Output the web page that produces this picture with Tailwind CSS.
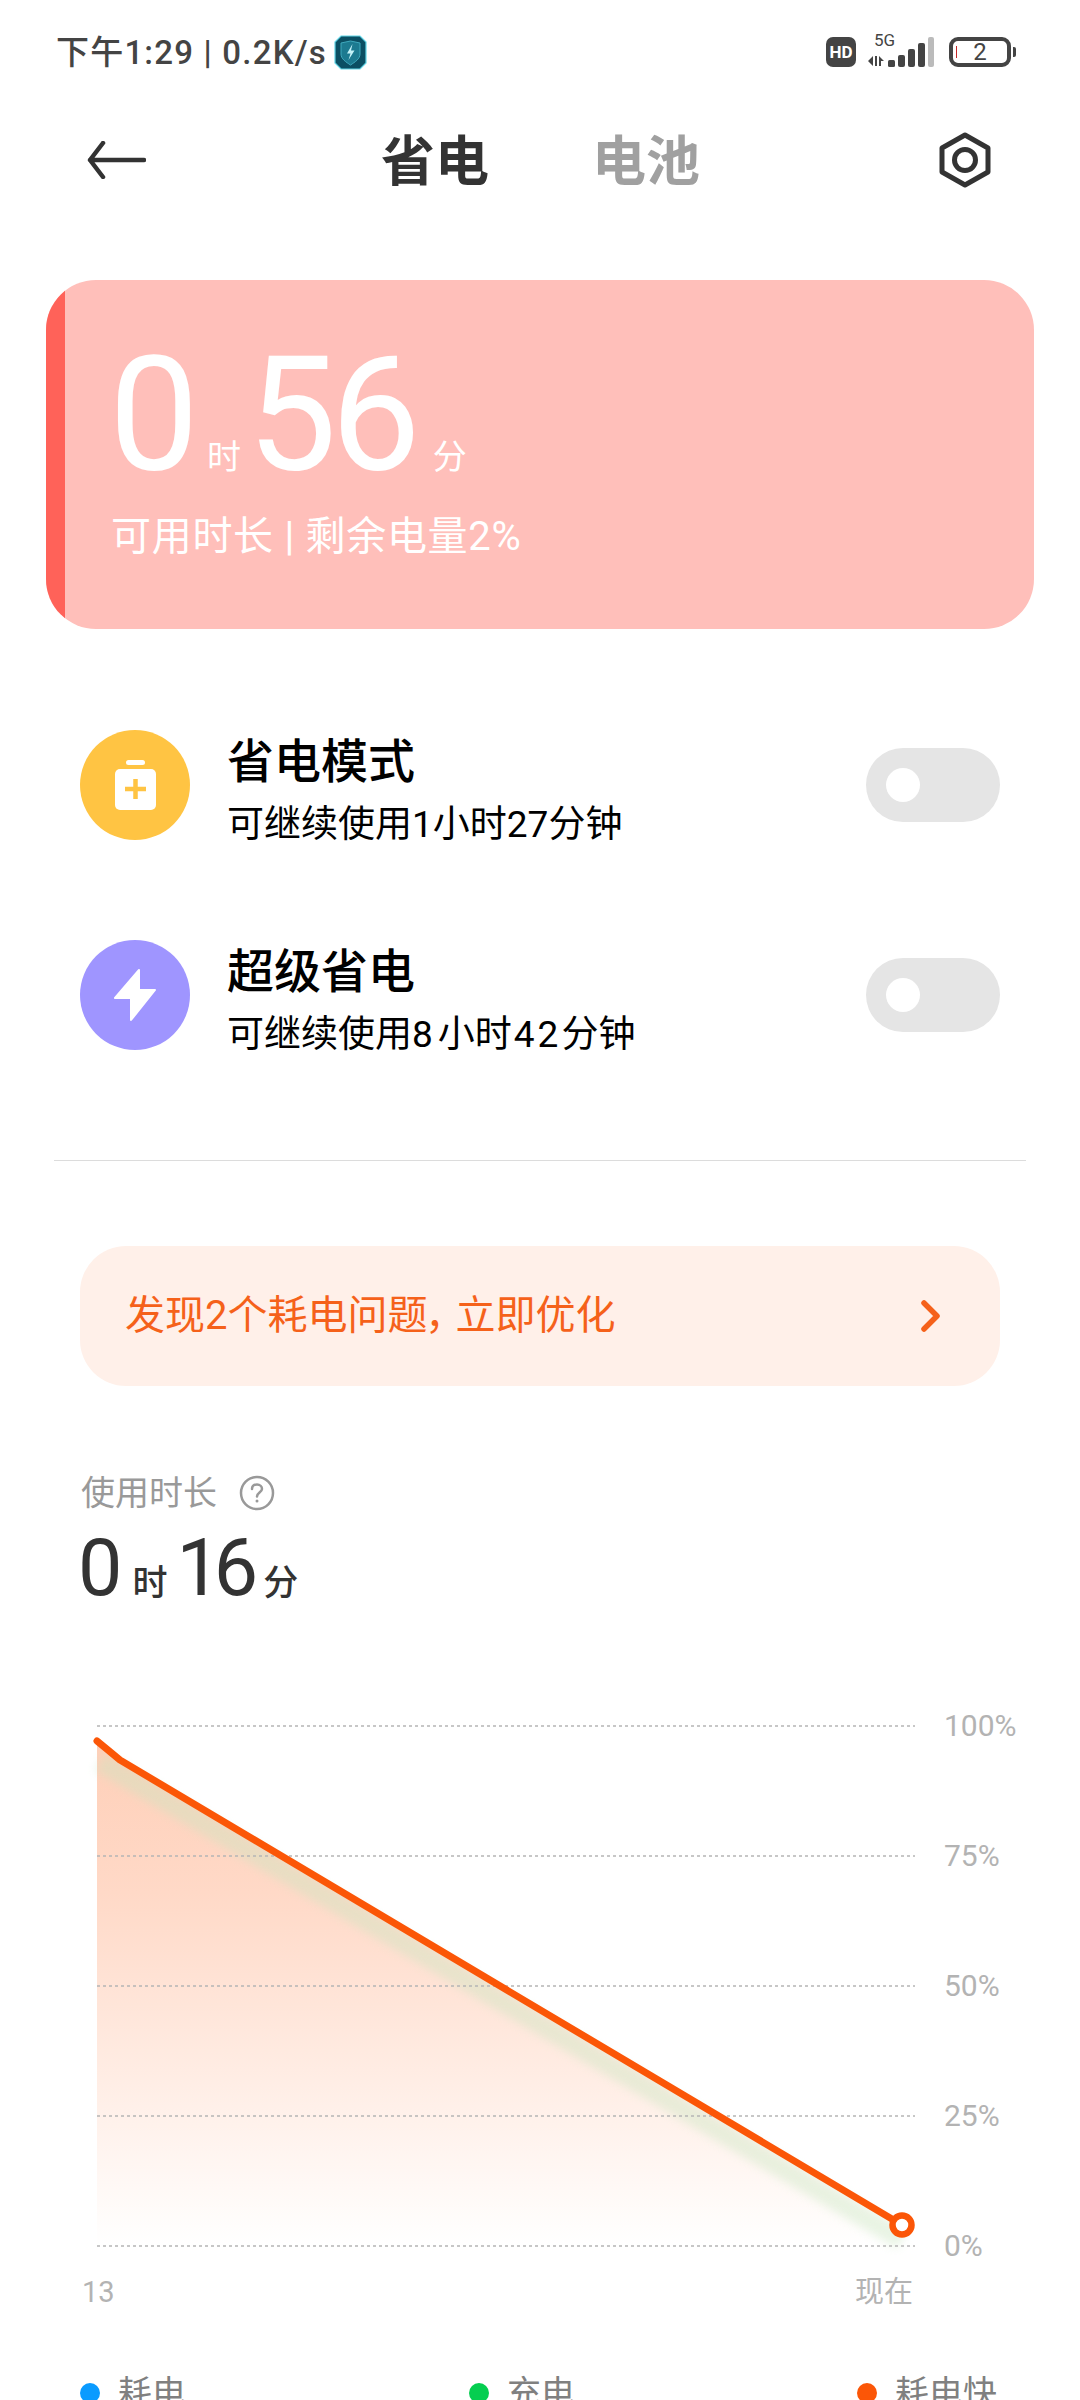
<!DOCTYPE html>
<html lang="zh">
<head>
    <meta charset="UTF-8">
    <meta name="viewport" content="width=device-width, initial-scale=1.0">
    <title>省电</title>
    <script src="https://cdn.jsdelivr.net/npm/@tailwindcss/browser@4"></script>
</head>
<body class="bg-white">
    <div class="w-[1080px] h-[2400px] overflow-hidden bg-white font-['Roboto','Noto_Sans_CJK_SC',sans-serif]">

        <!-- 状态栏 -->
        <div class="h-[104px] flex items-center pl-[56px] pr-[64px] text-[#444]">
            <span class="text-[33px] leading-none tracking-[1.200px] font-medium whitespace-nowrap">下午1:29 | 0.2K/s</span>
            <svg class="ml-[7px]" width="33" height="35" viewBox="0 0 33 35">
                <path d="M7 1H26L32 7V28L26 34H7L1 28V7Z" fill="#0b4f63" stroke="#63d5e6" stroke-width="1.200"/>
                <path d="M7 8L16.500 6L26 8V19C26 24 21 27 16.500 30C12 27 7 24 7 19Z" fill="#1c7a90" stroke="#3fa9bd" stroke-width="1"/>
                <path d="M18.500 9L13 18.500H16.500L14.500 25L20.500 15.500H17Z" fill="#c4f2f8"/>
            </svg>
            <div class="ml-auto w-[30px] h-[30px] rounded-[7px] bg-[#444] text-white text-[17px] font-bold leading-none flex items-center justify-center">HD</div>
            <div class="relative ml-[12px] w-[66px] h-[32px]">
                <span class="absolute left-[6px] -top-[3px] text-[17px] leading-[15px] text-[#444]">5G</span>
                <svg class="absolute left-0 top-0" width="66" height="32" viewBox="868 36 66 32">
                    <path d="M868 61L873 56V66ZM875 56V66H877V56ZM879 56L884 61H881V66H879Z" fill="#444"/>
                    <rect x="888" y="60" width="7" height="7" rx="1.500" fill="#444"/>
                    <rect x="898" y="55" width="7" height="12" rx="2" fill="#444"/>
                    <rect x="908" y="49" width="7" height="18" rx="2" fill="#444"/>
                    <rect x="918" y="43" width="7" height="24" rx="2" fill="#444"/>
                    <rect x="928" y="37" width="6" height="30" rx="2" fill="#bbb"/>
                </svg>
            </div>
            <div class="relative ml-[15px] w-[62px] h-[30px] border-[4px] border-[#444] rounded-[9px] flex items-center justify-center">
                <span class="absolute left-[3px] top-[5px] w-[1px] h-[12px] bg-[#c62828]"></span>
                <span class="text-[24px] leading-none text-[#444]">2</span>
            </div>
            <div class="ml-[2px] w-[3px] h-[10px] rounded-r-[2px] bg-[#444]"></div>
        </div>

        <!-- 顶部导航 -->
        <div class="h-[112px] flex items-center pl-[86px] pr-[89px]">
            <svg width="60" height="38" viewBox="0 0 60 38" fill="none" stroke="#333" stroke-width="4.500" stroke-linecap="round" stroke-linejoin="round">
                <path d="M58 19H4M17 2L4 19L17 36"/>
            </svg>
            <div class="ml-[235px] pt-[5px] flex gap-[103px] text-[54px] leading-none font-bold">
                <span class="text-[#333]">省电</span>
                <span class="text-[#a0a0a0]">电池</span>
            </div>
            <svg class="ml-auto" width="52" height="56" viewBox="0 0 52 56" fill="none" stroke="#333" stroke-width="5" stroke-linejoin="round">
                <path d="M26 3L49 16V40L26 53L3 40V16Z"/>
                <circle cx="26" cy="28" r="10.500"/>
            </svg>
        </div>

        <!-- 电量卡片 -->
        <div class="mt-[64px] ml-[46px] w-[988px] h-[349px] rounded-[50px] overflow-hidden bg-[#ffbfba] flex">
            <div class="w-[19px] bg-[#ff6259]"></div>
            <div class="pl-[44px] pt-[55px] text-white">
                <div class="h-[160px] flex items-baseline leading-none">
                    <span class="text-[160px]">0</span>
                    <span class="ml-[8px] text-[34px]">时</span>
                    <span class="ml-[6px] text-[160px] tracking-[-6px]">56</span>
                    <span class="ml-[18px] text-[34px]">分</span>
                </div>
                <div class="mt-[22px] pl-[2px] text-[40px] leading-none tracking-[0.7px]">可用时长 | 剩余电量2%</div>
            </div>
        </div>

        <!-- 省电模式 -->
        <div class="mt-[101px] ml-[80px] w-[920px] h-[110px] flex items-center">
            <div class="w-[110px] h-[110px] rounded-full bg-[#ffc443] flex items-center justify-center">
                <svg width="41" height="50" viewBox="0 0 41 50">
                    <rect x="11" y="0" width="19" height="5" rx="2.500" fill="#fff"/>
                    <rect x="0" y="9" width="41" height="41" rx="5" fill="#fff"/>
                    <path d="M20.500 19V39M10 29H31" stroke="#ffc443" stroke-width="4.500"/>
                </svg>
            </div>
            <div class="ml-[37px] pt-[10px] flex-1">
                <div class="text-[47px] leading-[56px] font-medium text-black">省电模式</div>
                <div class="mt-[13px] text-[37px] leading-[44px] text-black">可继续使用1小时27分钟</div>
            </div>
            <div class="w-[134px] h-[74px] rounded-full bg-[#e5e5e5] flex items-center pl-[20px]">
                <div class="w-[34px] h-[34px] rounded-full bg-white"></div>
            </div>
        </div>

        <!-- 超级省电 -->
        <div class="mt-[100px] ml-[80px] w-[920px] h-[110px] flex items-center">
            <div class="w-[110px] h-[110px] rounded-full bg-[#9f95ff] flex items-center justify-center">
                <svg width="44" height="54" viewBox="0 0 44 54">
                    <path d="M26 2L2 30H18V52L42 22H26Z" fill="#fff" stroke="#fff" stroke-width="2" stroke-linejoin="round"/>
                </svg>
            </div>
            <div class="ml-[37px] pt-[10px] flex-1">
                <div class="text-[47px] leading-[56px] font-medium text-black">超级省电</div>
                <div class="mt-[13px] text-[37px] leading-[44px] text-black">可继续使用<span class="tracking-[5px]">8</span>小时<span class="ml-[2px] tracking-[3px]">42</span>分钟</div>
            </div>
            <div class="w-[134px] h-[74px] rounded-full bg-[#e5e5e5] flex items-center pl-[20px]">
                <div class="w-[34px] h-[34px] rounded-full bg-white"></div>
            </div>
        </div>

        <div class="mt-[110px] ml-[54px] w-[972px] h-[1px] bg-[#dcdcdc]"></div>

        <!-- 耗电问题提示 -->
        <div class="mt-[85px] ml-[80px] w-[920px] h-[140px] rounded-[46px] bg-[#fff0e9] flex items-center pl-[45px] pr-[58px] text-[#f5611a]">
            <span class="text-[40px] leading-none whitespace-nowrap">发现2个耗电问题<span class="mr-[8px] [font-feature-settings:'palt']">，</span>立即优化</span>
            <svg class="ml-auto" width="22" height="32" viewBox="0 0 22 32" fill="none" stroke="#f5611a" stroke-width="5.500" stroke-linecap="round" stroke-linejoin="round">
                <path d="M4 3L17 16L4 29"/>
            </svg>
        </div>

        <!-- 使用时长 -->
        <div class="mt-[87px] ml-[81px] h-[40px] flex items-center">
            <span class="text-[34px] leading-none text-[#999]">使用时长</span>
            <svg class="ml-[22px]" width="36" height="36" viewBox="0 0 36 36" fill="none" stroke="#999" stroke-width="2.500">
                <circle cx="18" cy="18" r="16"/>
                <path d="M13 14C13 11 15 9.500 18 9.500C21 9.500 23 11.500 23 14C23 17 18 17.500 18 21.500" stroke-linecap="round"/>
                <circle cx="18" cy="26" r="1.500" fill="#999" stroke="none"/>
            </svg>
        </div>
        <div class="mt-[16px] ml-[78px] h-[80px] flex items-baseline leading-none text-[#333]">
            <span class="text-[79px]">0</span>
            <span class="ml-[10px] text-[35px] font-medium">时</span>
            <span class="ml-[9px] text-[79px] tracking-[-7px]">16</span>
            <span class="ml-[12px] text-[35px] font-medium">分</span>
        </div>

        <!-- 图表 -->
        <div class="mt-[102px] ml-[97px] flex">
            <svg width="818" height="550" viewBox="97 1711 818 550" class="overflow-visible">
                <defs>
                    <linearGradient id="areaFill" x1="0" y1="0" x2="0" y2="1">
                        <stop offset="0" stop-color="#fecfb8"/>
                        <stop offset="0.3" stop-color="#ffd9c7"/>
                        <stop offset="1" stop-color="#ffffff"/>
                    </linearGradient>
                    <filter id="soft" x="-10%" y="-10%" width="120%" height="120%">
                        <feGaussianBlur stdDeviation="5"/>
                    </filter>
                </defs>
                <path d="M97 1741Q108 1750 120 1760L902 2225V2246H97Z" fill="url(#areaFill)"/>
                <path d="M100 1762L902 2240" stroke="#c8e6c0" stroke-width="20" fill="none" opacity="0.4" filter="url(#soft)"/>
                <g stroke="#b5b5b5" stroke-width="1.500" stroke-dasharray="3 3">
                    <path d="M97 1726H915"/>
                    <path d="M97 1856H915"/>
                    <path d="M97 1986H915"/>
                    <path d="M97 2116H915"/>
                    <path d="M97 2246H915"/>
                </g>
                <path d="M97 1741Q108 1750 120 1760L902 2225" stroke="#fb5607" stroke-width="7" fill="none" stroke-linejoin="round" stroke-linecap="round"/>
                <circle cx="902" cy="2225" r="9.500" fill="#fff" stroke="#fb5607" stroke-width="6.500"/>
            </svg>
            <div class="ml-[29px] h-[550px] flex flex-col justify-between text-[30px] leading-[30px] text-[#b3b3b3]">
                <span>100%</span>
                <span>75%</span>
                <span>50%</span>
                <span>25%</span>
                <span>0%</span>
            </div>
        </div>
        <div class="mt-[13px] ml-[82px] w-[831px] flex justify-between text-[29px] leading-[36px] text-[#b3b3b3]">
            <span>13</span>
            <span>现在</span>
        </div>

        <!-- 图例 -->
        <div class="mt-[63px] ml-[80px] flex text-[34px] leading-[40px] text-[#808080]">
            <div class="w-[389px] flex items-center gap-[18px]">
                <span class="w-[20px] h-[20px] rounded-full bg-[#0a9bff]"></span>耗电
            </div>
            <div class="w-[388px] flex items-center gap-[18px]">
                <span class="w-[20px] h-[20px] rounded-full bg-[#05ce50]"></span>充电
            </div>
            <div class="flex items-center gap-[18px]">
                <span class="w-[20px] h-[20px] rounded-full bg-[#fb5607]"></span>耗电快
            </div>
        </div>
    </div>
</body>
</html>
